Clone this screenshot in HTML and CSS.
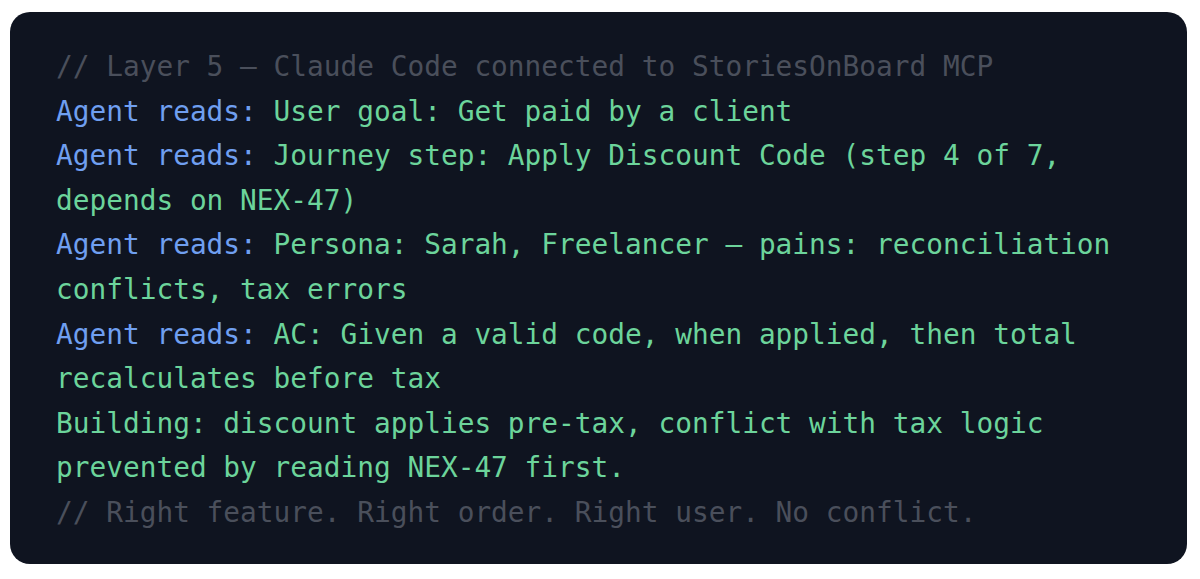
FILE: index.html
```html
<!DOCTYPE html>
<html lang="en">
<head>
<meta charset="utf-8">
<title>Layer 5</title>
<link rel="stylesheet" href="styles.css">
</head>
<body>
<div class="code">
  <div class="line comment">// Layer 5 — Claude Code connected to StoriesOnBoard MCP</div>
  <div class="line"><span class="key">Agent reads: </span><span class="val">User goal: Get paid by a client</span></div>
  <div class="line"><span class="key">Agent reads: </span><span class="val">Journey step: Apply Discount Code (step 4 of 7, depends on NEX-47)</span></div>
  <div class="line"><span class="key">Agent reads: </span><span class="val">Persona: Sarah, Freelancer — pains: reconciliation conflicts, tax errors</span></div>
  <div class="line"><span class="key">Agent reads: </span><span class="val">AC: Given a valid code, when applied, then total recalculates before tax</span></div>
  <div class="line val">Building: discount applies pre-tax, conflict with tax logic prevented by reading NEX-47 first.</div>
  <div class="line comment">// Right feature. Right order. Right user. No conflict.</div>
</div>
</body>
</html>
```
FILE: styles.css
```css
html, body {
  margin: 0;
  padding: 0;
  background: #ffffff;
}
body {
  padding: 12px 12px 0 10px;
}
.code {
  box-sizing: border-box;
  width: 1177px;
  height: 552px;
  background: #0f1420;
  border-radius: 20px;
  padding: 33px 46px 29px 46px;
  font-family: "DejaVu Sans Mono", "Liberation Mono", monospace;
  font-size: 27.8px;
  line-height: 44.6px;
  color: #6cd49b;
}
.line {
  white-space: normal;
}
.comment {
  color: #4a4f5b;
}
.key {
  color: #6f9ff0;
}
.val {
  color: #6cd49b;
}
```
